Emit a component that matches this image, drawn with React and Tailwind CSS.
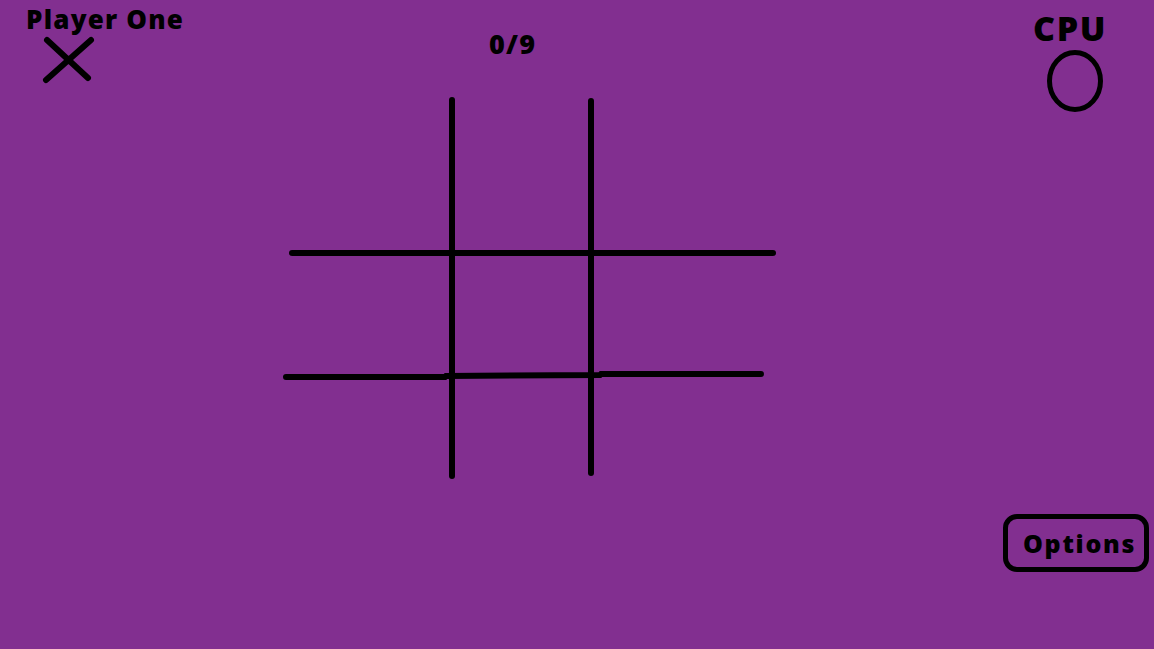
import React from "react";

const font = { fontFamily: '"Open Sans", "Noto Sans", sans-serif' };

function XMark() {
  return (
    <svg width="60" height="56" viewBox="0 0 60 56" className="ml-[13px] -mt-[3px]">
      <path d="M7 47 L52 7 M8 7 L49 45" stroke="#000" strokeWidth="6" strokeLinecap="round" fill="none" />
    </svg>
  );
}

function OMark() {
  return (
    <svg width="64" height="66" viewBox="0 0 64 66">
      <ellipse cx="32" cy="33" rx="25.5" ry="28.5" stroke="#000" strokeWidth="5" fill="none" />
    </svg>
  );
}

function Board() {
  // hand-drawn grid, coordinates relative to x=280, y=94
  return (
    <svg width="500" height="390" viewBox="0 0 500 390" className="mt-[33px]">
      <g stroke="#000" strokeWidth="6" strokeLinecap="round" fill="none">
        <path d="M172 6 L172 382" />
        <path d="M311 7 L311 379" />
        <path d="M12 159 L493 159" />
        <path d="M6 283 L165 283 L166 282 L320 281 L321 280 L481 280" />
      </g>
    </svg>
  );
}

export default function App() {
  return (
    <div className="flex w-[1154px] h-[649px] bg-[#822f90] text-black overflow-hidden" style={font}>
      <div className="w-[280px] flex flex-col pl-[26px] pt-[2px]">
        <div className="text-[26px] font-extrabold leading-[34px] tracking-[1.2px]">Player One</div>
        <XMark />
      </div>

      <div className="w-[500px] flex flex-col">
        <div className="ml-[209px] mt-[27px] text-[27px] font-extrabold leading-[34px] h-[34px] tracking-[1.3px]">0/9</div>
        <Board />
      </div>

      <div className="flex-1 flex flex-col items-end pr-[5px]">
        <div className="flex flex-col items-center mr-[42px] pt-[8px]">
          <div className="text-[34px] font-extrabold leading-[40px] tracking-[1.5px] -ml-[10px]">CPU</div>
          <OMark />
        </div>
        <button className="mt-[400px] w-[146px] h-[58px] border-[5px] border-black rounded-[14px] text-[25px] font-extrabold leading-none tracking-[1.7px] flex items-center justify-start pl-[15px]">
          Options
        </button>
      </div>
    </div>
  );
}
